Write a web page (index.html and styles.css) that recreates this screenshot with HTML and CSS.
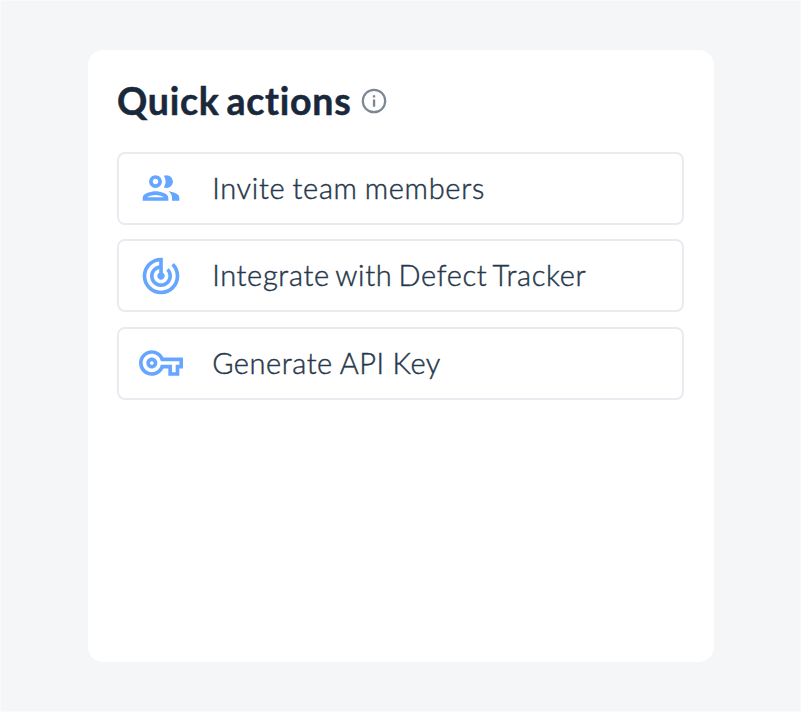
FILE: index.html
```html
<!DOCTYPE html>
<html lang="en">
<head>
<meta charset="utf-8">
<title>Quick actions</title>
<link rel="stylesheet" href="styles.css">
</head>
<body>
<main class="card">
  <header class="header">
    <h1 class="title">Quick actions</h1>
    <svg class="info" viewBox="0 0 26 26" aria-hidden="true"><circle cx="13" cy="13" r="11.2" fill="none" stroke="currentColor" stroke-width="2.2"/><path fill="currentColor" d="M11.9 11.4h2.3v7.4h-2.3zM11.9 7.2h2.3v2.3h-2.3z"/></svg>
  </header>
  <nav class="actions">
    <a class="action">
      <svg class="icon" viewBox="0 0 24 24" aria-hidden="true"><path d="M9 13.75c-2.34 0-7 1.17-7 3.5V19h14v-1.75c0-2.33-4.66-3.5-7-3.5zM4.34 17c.84-.58 2.87-1.25 4.66-1.25s3.82.67 4.66 1.25H4.34zM9 12c1.93 0 3.5-1.57 3.5-3.5S10.93 5 9 5 5.5 6.57 5.5 8.5 7.07 12 9 12zm0-5c.83 0 1.5.67 1.5 1.5S9.83 10 9 10s-1.5-.67-1.5-1.5S8.17 7 9 7zm7.04 6.81c1.16.84 1.96 1.96 1.96 3.44V19h4v-1.75c0-2.02-3.5-3.17-5.96-3.44zM15 12c1.93 0 3.5-1.57 3.5-3.5S16.93 5 15 5c-.54 0-1.04.13-1.5.35.63.89 1 1.98 1 3.15s-.37 2.26-1 3.15c.46.22.96.35 1.5.35z"/></svg>
      <span class="label invite">Invite team members</span>
    </a>
    <a class="action">
      <svg class="icon" viewBox="0 0 24 24" aria-hidden="true"><path d="M19.07 4.93l-1.41 1.41C19.1 7.79 20 9.79 20 12c0 4.42-3.58 8-8 8s-8-3.58-8-8c0-4.08 3.05-7.44 7-7.93v2.02C8.16 6.57 6 9.03 6 12c0 3.31 2.69 6 6 6s6-2.69 6-6c0-1.66-.67-3.16-1.76-4.24l-1.41 1.41C15.55 9.9 16 10.9 16 12c0 2.21-1.79 4-4 4s-4-1.79-4-4c0-1.86 1.28-3.41 3-3.86v2.14c-.6.35-1 .98-1 1.72 0 1.1.9 2 2 2s2-.9 2-2c0-.74-.4-1.38-1-1.72V2h-1C6.48 2 2 6.48 2 12s4.48 10 10 10 10-4.48 10-10c0-2.76-1.12-5.26-2.93-7.07z"/></svg>
      <span class="label integrate">Integrate with Defect Tracker</span>
    </a>
    <a class="action">
      <svg class="icon" viewBox="0 0 24 24" aria-hidden="true"><path d="M22 19h-6v-4h-2.68c-1.14 2.42-3.6 4-6.32 4-3.86 0-7-3.14-7-7s3.14-7 7-7c2.72 0 5.17 1.58 6.32 4H24v6h-2v4zm-4-2h2v-4h2v-2H11.94l-.23-.67C11.01 8.34 9.11 7 7 7c-2.76 0-5 2.24-5 5s2.24 5 5 5c2.11 0 4.01-1.34 4.71-3.33l.23-.67H18v4zM7 15c-1.65 0-3-1.35-3-3s1.35-3 3-3 3 1.35 3 3-1.35 3-3 3zm0-4c-.55 0-1 .45-1 1s.45 1 1 1 1-.45 1-1-.45-1-1-1z"/></svg>
      <span class="label generate">Generate API Key</span>
    </a>
  </nav>
</main>
</body>
</html>
```
FILE: styles.css
```css
* { box-sizing: border-box; }
body {
  margin: 0;
  height: 712px;
  padding: 49px 86.5px 49px 87px;
  border: 1px solid #f9fafb;
  background: #f4f6f8;
  font-family: Lato, "Liberation Sans", sans-serif;
  font-variant-ligatures: none;
  overflow: hidden;
}
.card {
  height: 612px;
  padding: 29px 29.5px 0 29px;
  border-radius: 15px;
  background: #fff;
}
.header {
  display: flex;
  align-items: center;
  gap: 10.5px;
  height: 43px;
}
.title {
  margin: 0;
  color: #1a283b;
  font-size: 37.5px;
  line-height: 44px;
  font-weight: 700;
  letter-spacing: 0.75px;
  word-spacing: -3px;
  -webkit-text-stroke: 0.5px #1a283b;
  white-space: nowrap;
  width: 233px;
}
.info { width: 26px; height: 26px; color: #7b8794; flex: none; }
.actions {
  display: grid;
  gap: 14.5px;
  margin-top: 29.5px;
}
.action {
  display: flex;
  align-items: center;
  gap: 29.2px;
  height: 73px;
  padding-left: 20px;
  border: 2px solid #e9ebf0;
  border-radius: 8px;
}
.icon { width: 44px; height: 44px; fill: #66a6ff; flex: none; }
.label {
  margin-top: -1px;
  color: #26374b;
  font-size: 29px;
  line-height: 40px;
  font-weight: 300;
  -webkit-text-stroke: 0.45px #26374b;
  white-space: nowrap;
}
.invite { letter-spacing: 0.7px; word-spacing: -1.5px; }
.integrate { letter-spacing: 0.65px; word-spacing: -2.4px; }
.generate { letter-spacing: 0.55px; word-spacing: -0.5px; }
```
